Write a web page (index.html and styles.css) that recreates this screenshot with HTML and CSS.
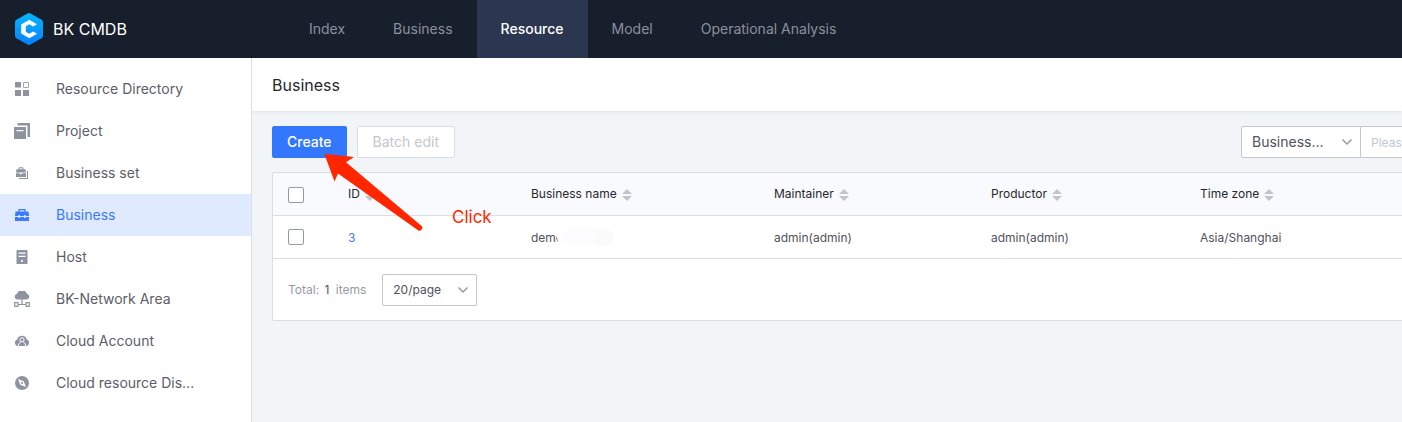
FILE: index.html
```html
<!DOCTYPE html>
<html lang="en">
<head>
<meta charset="utf-8">
<title>BK CMDB</title>
<link rel="stylesheet" href="styles.css">
</head>
<body>
<header class="topbar">
  <a class="brand" href="#">
    <svg class="brand-logo" viewBox="0 0 28 32" aria-hidden="true">
      <defs><linearGradient id="logo" x1="0" y1="0" x2="0" y2="1"><stop offset="0" stop-color="#04b6ff"/><stop offset="1" stop-color="#0a80ff"/></linearGradient></defs>
      <path d="M12.5.4Q14-.4 15.500.4L26.500 6.700Q28 7.600 28 9.300V22.700Q28 24.400 26.500 25.300L15.500 31.600Q14 32.400 12.500 31.600L1.500 25.300Q0 24.400 0 22.700V9.300Q0 7.600 1.500 6.700Z" fill="url(#logo)"/>
      <path d="M22 11.200 14.300 6.800 6.200 11.400V20.600L14.300 25.200 22 20.800 18.200 18.600 14.300 20.800 10.800 18.800V13.300L14.300 11.200 18.200 13.400Z" fill="#fff"/>
    </svg>
    <span>BK CMDB</span>
  </a>
  <nav class="topnav">
    <a href="#">Index</a>
    <a href="#">Business</a>
    <a href="#" class="active">Resource</a>
    <a href="#">Model</a>
    <a href="#">Operational Analysis</a>
  </nav>
</header>
<div class="layout">
  <nav class="sidebar">
    <a href="#"><svg class="icon" viewBox="0 0 16 16" aria-hidden="true"><path d="M1.500 1h5a.5.500 0 0 1 .5.500v5h-6v-5ZM1 9h6v6H1.500A.5.500 0 0 1 1 14.500ZM9 9h6v5.500a.5.500 0 0 1-.5.500H9Z"/><path d="M9.500 1.500h5v5h-5Z" fill="none" stroke="currentColor" opacity=".8"/></svg>Resource Directory</a>
    <a href="#"><svg class="icon" viewBox="0 0 16 16" aria-hidden="true"><path d="M3.500 0H15.500Q16 0 16 .5V14H13.500V2.500H3.500Z"/><path fill-rule="evenodd" d="M.5 4H11.500Q12 4 12 4.500V15.500Q12 16 11.500 16H.5Q0 16 0 15.500V4.500Q0 4 .5 4ZM2.500 7V8.200H9.500V7Z"/></svg>Project</a>
    <a href="#"><svg class="icon" viewBox="0 0 16 16" aria-hidden="true"><path d="M5 4.500V2.800H9V4.500" fill="none" stroke="currentColor"/><path d="M2.500 4.300H11.500L12 7.500H2ZM2 8.300H5.800V9.300H8.200V8.300H12V12H2ZM13 6H14V14H5V13H13Z"/></svg>Business set</a>
    <a href="#" class="active"><svg class="icon" viewBox="0 0 16 16" aria-hidden="true"><path d="M5 5V2.600H11V5" fill="none" stroke="currentColor" stroke-width="1.300"/><path d="M1.500 4.500H14.500L15 9H11.500V8H10V9H6V8H4.500V9H1ZM1 10H4.500V11H6V10H10V11H11.500V10H15V14H1Z"/></svg>Business</a>
    <a href="#"><svg class="icon" viewBox="0 0 16 16" aria-hidden="true"><path fill-rule="evenodd" d="M3 1H13Q13.500 1 13.500 1.500V15H2.500V1.500Q2.500 1 3 1ZM4.500 3.500V4.700H11.500V3.500ZM4.500 6.800V8H11.500V6.800ZM7.200 11V13H8.800V11Z"/></svg>Host</a>
    <a href="#"><svg class="icon" viewBox="0 0 16 16" aria-hidden="true"><path d="M3 8.500A2.900 2.900 0 0 1 3.100 2.800 5.200 5.200 0 0 1 12.900 2.800 2.900 2.900 0 0 1 13 8.500Z"/><path d="M8 8V13.500M4 13.500H12M.7 11.700H4V15.300H.7ZM12 11.700H15.300V15.300H12Z" fill="none" stroke="currentColor" stroke-width="1.200"/></svg>BK-Network Area</a>
    <a href="#"><svg class="icon" viewBox="0 0 16 16" aria-hidden="true"><path d="M4.300 13A3.400 3.400 0 0 1 3.200 6.400 5 5 0 0 1 12.800 6.400 3.400 3.400 0 0 1 11.700 13Z"/><circle cx="8" cy="6.800" r="2.100" fill="none" stroke="#fff"/><path d="M4.200 13Q4.500 10 6.600 9.200M11.800 13Q11.500 10 9.400 9.200" fill="none" stroke="#fff"/></svg>Cloud Account</a>
    <a href="#"><svg class="icon" viewBox="0 0 16 16" aria-hidden="true"><circle cx="8" cy="8" r="7"/><path d="M4 4 9.700 6.300 12 12 6.300 9.700Z" fill="#fff"/><circle cx="8" cy="8" r="1.100"/></svg>Cloud resource Dis...</a>
  </nav>
  <main class="main">
    <h1 class="page-title">Business</h1>
    <div class="content">
      <div class="toolbar">
        <button class="btn primary" type="button">Create</button>
        <button class="btn" type="button" disabled>Batch edit</button>
        <div class="search">
          <div class="select filter">
            <select aria-label="Search field"><option>Business...</option></select>
            <svg class="chevron" viewBox="0 0 12 12" aria-hidden="true"><path d="M1.500 3.500 6 8 10.500 3.500"/></svg>
          </div>
          <input class="keyword" type="text" placeholder="Please enter" aria-label="Search keyword">
        </div>
      </div>
      <section class="panel">
        <table class="grid">
          <colgroup><col class="c-check"><col class="c-id"><col class="c-name"><col class="c-main"><col class="c-prod"><col></colgroup>
          <thead>
            <tr>
              <th class="pick"><input type="checkbox" aria-label="Select all"></th>
              <th>ID<svg class="sort" viewBox="0 0 10 12" aria-hidden="true"><path d="M5 0 10 5H0ZM0 7H10L5 12Z"/></svg></th>
              <th>Business name<svg class="sort" viewBox="0 0 10 12" aria-hidden="true"><path d="M5 0 10 5H0ZM0 7H10L5 12Z"/></svg></th>
              <th>Maintainer<svg class="sort" viewBox="0 0 10 12" aria-hidden="true"><path d="M5 0 10 5H0ZM0 7H10L5 12Z"/></svg></th>
              <th>Productor<svg class="sort" viewBox="0 0 10 12" aria-hidden="true"><path d="M5 0 10 5H0ZM0 7H10L5 12Z"/></svg></th>
              <th>Time zone<svg class="sort" viewBox="0 0 10 12" aria-hidden="true"><path d="M5 0 10 5H0ZM0 7H10L5 12Z"/></svg></th>
            </tr>
          </thead>
          <tbody>
            <tr>
              <td class="pick"><input type="checkbox" aria-label="Select business 3"></td>
              <td><a href="#">3</a></td>
              <td><span class="masked">demo<svg class="mask" viewBox="0 0 58 22" aria-hidden="true"><path d="M4 0H38V20H4Q-2 12 4 0Z" fill="#fff"/><path d="M38 2H50Q58 4 58 12 56 20 46 21L38 19Z" fill="#fbfbfc"/><path d="M6 1H38V19H6Z" fill="#fdfdff"/></svg></span></td>
              <td>admin(admin)</td>
              <td>admin(admin)</td>
              <td>Asia/Shanghai</td>
            </tr>
          </tbody>
        </table>
        <footer class="pager">
          <span class="total">Total: <b>1</b> items</span>
          <div class="select size">
            <select aria-label="Items per page"><option>20/page</option></select>
            <svg class="chevron" viewBox="0 0 12 12" aria-hidden="true"><path d="M1.500 3.500 6 8 10.500 3.500"/></svg>
          </div>
        </footer>
      </section>
    </div>
    <svg class="arrow" viewBox="0 0 100 80" aria-hidden="true"><path d="M.3.700 30 4 22 9.300 97 72.500A2.500 2.500 0 0 1 94 77.200L14 20.500 10.500 28.500Z" fill="#ff2600"/></svg>
    <span class="note">Click</span>
  </main>
</div>
</body>
</html>
```
FILE: styles.css
```css
* { box-sizing: border-box; }

body {
  margin: 0;
  min-height: 100vh;
  display: flex;
  flex-direction: column;
  font: 14px/20px Inter, "Liberation Sans", sans-serif;
  color: #5b5e68;
  background: #f1f5f8;
}

a { color: inherit; text-decoration: none; }

.topbar {
  display: flex;
  height: 58px;
  background: #181f2c;
}

.brand {
  flex: 0 0 285px;
  display: flex;
  align-items: center;
  gap: 10px;
  padding-left: 15px;
  color: #fff;
  font-size: 16px;
}

.brand-logo { width: 28px; height: 32px; }

.topnav { display: flex; }

.topnav a {
  display: flex;
  align-items: center;
  padding: 0 24px;
  color: #8a909c;
}

.topnav .active {
  background: #2b3750;
  color: #fff;
  font-weight: 500;
}

.layout { flex: 1; display: flex; }

.sidebar {
  flex: 0 0 252px;
  padding-top: 10px;
  background: #fff;
  border-right: 1px solid #dcdee5;
}

.sidebar a {
  display: flex;
  align-items: center;
  gap: 26px;
  height: 42px;
  padding-left: 14px;
}

.sidebar .active { background: #dfe9ff; color: #3a7bff; }

.icon {
  width: 16px;
  height: 16px;
  color: #8d93a1;
  fill: currentColor;
}

.active .icon { color: #3a7bff; }

.main { position: relative; flex: 1; min-width: 0; overflow: hidden; }

.page-title {
  margin: 0;
  padding: 17px 20px 16px;
  font-size: 16px;
  font-weight: 400;
  color: #26282d;
  background: #fff;
  box-shadow: 0 1px 3px #dde1e6;
}

.content { padding: 15px 0 0 20px; }

.toolbar { display: flex; gap: 10px; }

.btn {
  height: 32px;
  padding: 0 15px;
  font: inherit;
  color: #c4c6cc;
  background: #fff;
  border: 1px solid #dcdee5;
  border-radius: 2px;
}

.primary {
  padding: 0 14px;
  color: #fff;
  font-weight: 500;
  background: #3377ff;
  border-color: #3377ff;
}

.search { display: flex; margin-left: auto; }

.select { position: relative; height: 32px; }

.select select {
  appearance: none;
  width: 100%;
  height: 100%;
  padding: 0 10px;
  font: inherit;
  color: #4f525b;
  background: #fff;
  border: 1px solid #c4c6cc;
  border-radius: 2px;
}

.chevron {
  position: absolute;
  right: 8px;
  top: 10px;
  width: 12px;
  height: 12px;
  fill: none;
  stroke: #979ba5;
  stroke-width: 1.500;
  pointer-events: none;
}

.filter { width: 120px; }

.filter select { border-radius: 2px 0 0 2px; }

.keyword {
  width: 41px;
  height: 32px;
  padding: 0 0 0 10px;
  font: 12px/20px Inter, "Liberation Sans", sans-serif;
  background: #fff;
  border: 1px solid #c4c6cc;
  border-width: 1px 0;
}

.keyword::placeholder { color: #c1c9d3; }

.panel {
  margin-top: 14px;
  font-size: 12px;
  background: #fff;
  border: 1px solid #dcdee5;
  border-right: 0;
  border-radius: 2px 0 0 2px;
}

.grid { width: 100%; table-layout: fixed; border-collapse: separate; border-spacing: 0; }

.c-check { width: 59px; }
.c-id { width: 183px; }
.c-name { width: 243px; }
.c-main { width: 217px; }
.c-prod { width: 209px; }

.grid th,
.grid td {
  height: 43px;
  padding: 0 0 0 16px;
  text-align: left;
  font-weight: 400;
  white-space: nowrap;
  border-bottom: 1px solid #dcdee5;
}

.grid th { color: #26282d; background: #f9fafe; }
.grid td { padding-top: 2px; color: #4f525b; }
.grid td a { color: #3a7bff; }

.grid th.pick { padding: 2px 0 0 15px; }
.grid td.pick { padding: 0 0 0 15px; }

.grid input {
  appearance: none;
  display: block;
  width: 16px;
  height: 16px;
  margin: 0;
  background: #fff;
  border: 1px solid #979ba5;
  border-radius: 2px;
}

.sort {
  width: 10px;
  height: 12px;
  margin-left: 5px;
  vertical-align: middle;
  fill: #c0c4cc;
}

.masked { position: relative; }

.mask {
  position: absolute;
  left: 25px;
  top: -4px;
  width: 58px;
  height: 22px;
}

.pager {
  display: flex;
  align-items: center;
  gap: 16px;
  padding: 15px 15px 14px;
  color: #979ba5;
}

.total b { margin: 0 3px 0 2px; font-weight: 400; color: #4f525b; }

.size { width: 95px; }

.arrow {
  position: absolute;
  left: 72px;
  top: 95px;
  width: 100px;
  height: 80px;
}

.note {
  position: absolute;
  left: 200px;
  top: 149px;
  font-size: 17px;
  color: #ff2600;
}
```
